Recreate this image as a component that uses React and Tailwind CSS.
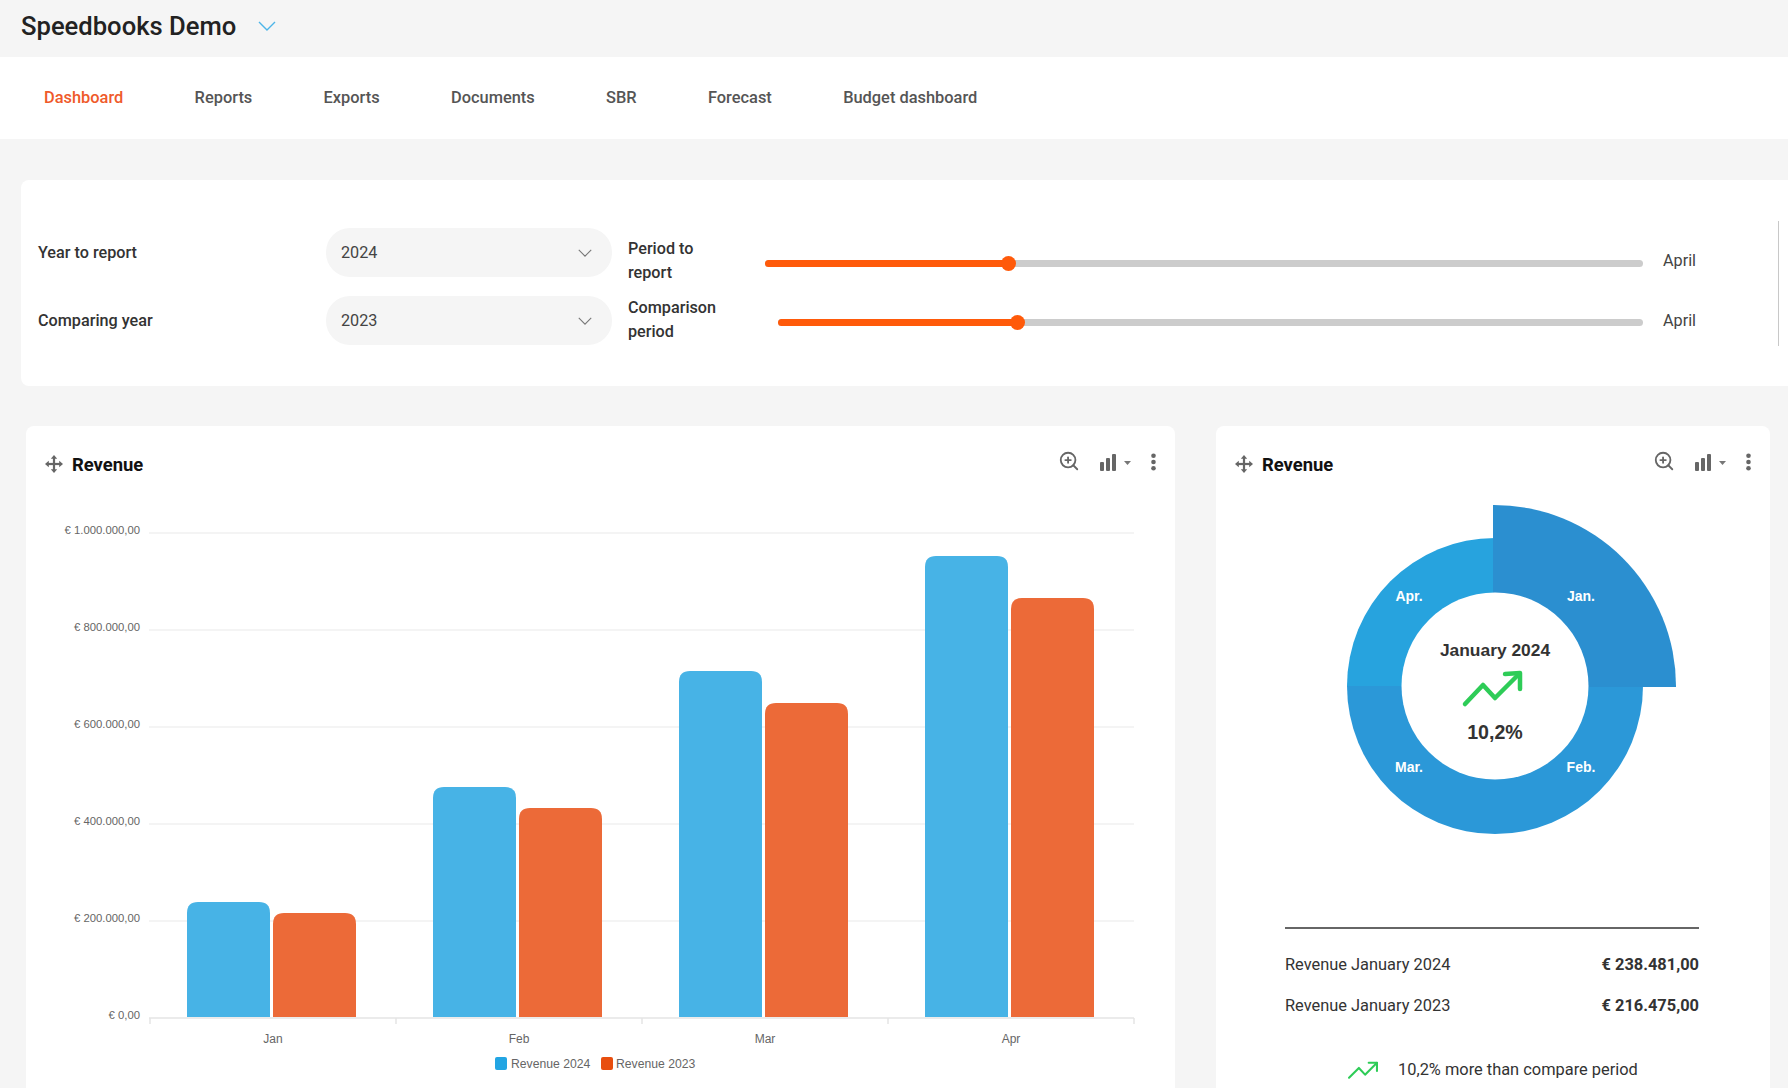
import React from 'react';
import { ZoomIn } from 'lucide-react';

const navItems = ['Dashboard', 'Reports', 'Exports', 'Documents', 'SBR', 'Forecast', 'Budget dashboard'];

const gridRows = [
  { label: '€ 1.000.000,00', y: 534 },
  { label: '€ 800.000,00', y: 631 },
  { label: '€ 600.000,00', y: 728 },
  { label: '€ 400.000,00', y: 825 },
  { label: '€ 200.000,00', y: 922 },
  { label: '€ 0,00', y: 1019 },
];

const months = [
  { label: 'Jan', center: 273, blue: 903, orange: 914 },
  { label: 'Feb', center: 519, blue: 788, orange: 809 },
  { label: 'Mar', center: 765, blue: 672, orange: 704 },
  { label: 'Apr', center: 1011, blue: 557, orange: 599 },
];

const barPath = (x, top) => {
  const w = 83;
  const r = 11;
  return `M${x} 1018 V${top + r} Q${x} ${top} ${x + r} ${top} H${x + w - r} Q${x + w} ${top} ${x + w} ${top + r} V1018 Z`;
};

const Chevron = ({ className, color }) => (
  <svg className={className} viewBox="0 0 18 10" fill="none" stroke={color} strokeWidth="1.4">
    <polyline points="1,1 9,9 17,1" />
  </svg>
);

const MoveIcon = () => (
  <svg className="mt-[1px]" width="18" height="18" viewBox="0 0 18 18" fill="#666">
    <rect x="7.9" y="2" width="2.2" height="14" />
    <rect x="2" y="7.9" width="14" height="2.2" />
    <polygon points="9,0 12.2,3.8 5.8,3.8" />
    <polygon points="9,18 12.2,14.2 5.8,14.2" />
    <polygon points="0,9 3.8,5.8 3.8,12.2" />
    <polygon points="18,9 14.2,5.8 14.2,12.2" />
  </svg>
);

const BarsIcon = () => (
  <svg width="16" height="17" viewBox="0 0 16 17" fill="#666">
    <rect x="0" y="8" width="4" height="9" rx="1" />
    <rect x="6" y="4" width="4" height="13" rx="1" />
    <rect x="12" y="0" width="4" height="17" rx="1" />
  </svg>
);

const Caret = () => (
  <svg className="block" width="7" height="4" viewBox="0 0 7 4" fill="#777">
    <polygon points="0,0 7,0 3.5,4" />
  </svg>
);

const DotsIcon = () => (
  <svg className="block" width="5" height="18" viewBox="0 0 5 18" fill="#666">
    <circle cx="2.5" cy="2.7" r="2.3" />
    <circle cx="2.5" cy="9" r="2.3" />
    <circle cx="2.5" cy="15.3" r="2.3" />
  </svg>
);

const TrendIcon = ({ className, strokeWidth }) => (
  <svg className={className} viewBox="0 0 58 34" fill="none" stroke="#2ecc57" strokeWidth={strokeWidth} strokeLinecap="round" strokeLinejoin="round">
    <polyline points="2,32 21,13 33,26 56,3" />
    <polyline points="40,3 56,3 56,19" />
  </svg>
);

const CardHeader = () => (
  <div className="flex h-[75px] items-start pl-[19px] pr-[19px] pt-[28px]">
    <MoveIcon />
    <span className="ml-[9px] mt-[1px] text-[18.4px] leading-[20px] font-bold text-[#111]">Revenue</span>
    <div className="ml-auto flex items-start">
      <ZoomIn size={22} strokeWidth={2} color="#666" className="-mt-[4px]" />
      <div className="ml-[20px] flex items-center">
        <BarsIcon />
        <span className="ml-[8px]"><Caret /></span>
      </div>
      <div className="ml-[20px] -mt-[1px]"><DotsIcon /></div>
    </div>
  </div>
);

const Select = ({ value }) => (
  <div className="flex h-[49px] w-[286px] items-center justify-between rounded-[24px] bg-[#f5f5f5] pl-[15px] pr-[20px] text-[#444]">
    <span className="mt-[2px]">{value}</span>
    <Chevron className="h-[8px] w-[14px]" color="#777" />
  </div>
);

const Slider = ({ fill, thumb }) => (
  <div className="relative h-[7px] flex-1 rounded-full bg-[#cccccc]">
    <div className="h-full rounded-full bg-[#ff5a0a]" style={{ width: fill }} />
    <div className="absolute top-[-4px] h-[15px] w-[15px] rounded-full bg-[#ff5a0a]" style={{ left: thumb }} />
  </div>
);

const BarChart = () => (
  <svg className="block" width="1149" height="586" viewBox="26 502 1149 586" fontFamily="'Liberation Sans', Arial, sans-serif">
    {gridRows.map((row) => (
      <g key={row.label}>
        <line x1="149" x2="1134" y1={row.y} y2={row.y} stroke={row.y === 1019 ? '#e4e4e4' : '#f0f0f0'} strokeWidth="1.5" />
        <text x="140" y={row.y + 1} textAnchor="end" fontSize="11.3" fill="#666">{row.label}</text>
      </g>
    ))}
    {[150, 396, 642, 888, 1134].map((x) => (
      <line key={x} x1={x} x2={x} y1="1019" y2="1025" stroke="#e4e4e4" strokeWidth="1.5" />
    ))}
    {months.map((m) => (
      <g key={m.label}>
        <path d={barPath(m.center - 86, m.blue)} fill="#47b3e6" />
        <path d={barPath(m.center, m.orange)} fill="#ec6a38" />
        <text x={m.center} y="1044" textAnchor="middle" fontSize="12" fill="#666">{m.label}</text>
      </g>
    ))}
    <rect x="495" y="1058" width="12" height="13" rx="2" fill="#22a5e3" />
    <text x="511" y="1069" fontSize="12.2" fill="#666">Revenue 2024</text>
    <rect x="601" y="1058" width="12" height="13" rx="2" fill="#e84e0f" />
    <text x="616" y="1069" fontSize="12.2" fill="#666">Revenue 2023</text>
  </svg>
);

const DonutChart = () => (
  <svg className="ml-[94px] block" width="370" height="370" viewBox="1310 502 370 370" fontFamily="'Liberation Sans', Arial, sans-serif">
    <path d="M1495 687 V539 A148 148 0 0 0 1347 687 Z" fill="#27a3de" />
    <path d="M1495 687 H1347 A148 148 0 0 0 1495 835 Z" fill="#2b98d8" />
    <path d="M1495 687 V835 A148 148 0 0 0 1643 687 Z" fill="#2b98d8" />
    <path d="M1493 687 V506 A182 181 0 0 1 1676 688 H1493 Z" fill="#2b8fd0" />
    <circle cx="1495" cy="687" r="93.5" fill="#fff" />
    <g fontSize="14" fontWeight="700" fill="#fff" textAnchor="middle">
      <text x="1581" y="602">Jan.</text>
      <text x="1409" y="602">Apr.</text>
      <text x="1409" y="773">Mar.</text>
      <text x="1581" y="773">Feb.</text>
    </g>
    <text x="1495" y="657" textAnchor="middle" fontSize="17.4" fontWeight="700" fill="#333">January 2024</text>
    <g fill="none" stroke="#2ecc57" strokeWidth="4.5" strokeLinecap="round" strokeLinejoin="round">
      <polyline points="1465,705 1483,686 1495,699 1519,675" />
      <polyline points="1505,675 1520,674 1520,690" />
    </g>
    <text x="1495" y="740" textAnchor="middle" fontSize="19.6" fontWeight="700" fill="#333">10,2%</text>
  </svg>
);

export default function App() {
  return (
    <div className="h-[1088px] overflow-hidden bg-[#f5f5f5] font-['Roboto',sans-serif] text-[16.4px] text-[#333]">
      {/* Header */}
      <div className="flex h-[57px] items-center pl-[21px]">
        <span className="-mt-[4px] text-[25.6px] font-medium text-[#222]">Speedbooks Demo</span>
        <Chevron className="ml-[22px] -mt-[6px] h-[10px] w-[18px]" color="#4db5e8" />
      </div>

      {/* Nav */}
      <div className="flex h-[82px] items-center gap-[71.3px] bg-white pl-[44px] font-medium text-[#555]">
        {navItems.map((item) => (
          <span key={item} className={item === 'Dashboard' ? 'text-[#ef5a2a]' : ''}>{item}</span>
        ))}
      </div>

      {/* Filters */}
      <div className="ml-[21px] mt-[41px] flex h-[206px] rounded-l-lg bg-white text-[16.2px]">
        <div className="flex flex-col gap-[19px] pl-[17px] pt-[48px]">
          {[['Year to report', '2024'], ['Comparing year', '2023']].map(([label, value]) => (
            <div key={label} className="flex items-center">
              <span className="mt-[2px] w-[288px] font-medium">{label}</span>
              <Select value={value} />
            </div>
          ))}
        </div>
        <div className="ml-[16px] flex w-[1149px] flex-col gap-[11px] pt-[57px]">
          <div className="flex h-[48px] items-center">
            <span className="w-[137px] leading-[24.5px] font-medium">Period to<br />report</span>
            <div className="mt-[5px] flex flex-1"><Slider fill="243px" thumb="236px" /></div>
            <span className="w-[134px] pl-[20px] text-[#444]">April</span>
          </div>
          <div className="flex h-[48px] items-center">
            <span className="w-[150px] leading-[24px] font-medium">Comparison<br />period</span>
            <div className="mt-[5px] flex flex-1"><Slider fill="239px" thumb="232px" /></div>
            <span className="mt-[2px] w-[134px] pl-[20px] text-[#444]">April</span>
          </div>
        </div>
        <div className="ml-[1px] mt-[41px] h-[125px] w-[1px] bg-[#c8c8c8]" />
      </div>

      {/* Charts */}
      <div className="ml-[26px] mt-[40px] flex gap-[41px]">
        <div className="h-[700px] w-[1149px] rounded-t-lg bg-white">
          <CardHeader />
          <BarChart />
        </div>
        <div className="h-[700px] w-[554px] rounded-t-lg bg-white">
          <CardHeader />
          <DonutChart />
          <div className="ml-[69px] mt-[56px] w-[414px] border-t-[2px] border-[#666]">
            <div className="mt-[24px] flex justify-between leading-[24px]">
              <span>Revenue January 2024</span>
              <span className="font-bold">€ 238.481,00</span>
            </div>
            <div className="mt-[17px] flex justify-between leading-[24px]">
              <span>Revenue January 2023</span>
              <span className="font-bold">€ 216.475,00</span>
            </div>
            <div className="ml-[63px] mt-[40px] flex items-center leading-[24px]">
              <TrendIcon className="h-[18px] w-[30px]" strokeWidth="4" />
              <span className="ml-[20px]">10,2% more than compare period</span>
            </div>
          </div>
        </div>
      </div>
    </div>
  );
}
